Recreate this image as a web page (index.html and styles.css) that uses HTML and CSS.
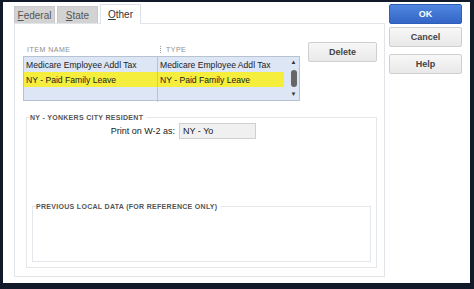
FILE: index.html
```html
<!DOCTYPE html>
<html lang="en">
<head>
    <meta charset="UTF-8">
    <title>Payroll Item - Other</title>
    <link rel="stylesheet" href="styles.css">
</head>
<body>
    <div class="window">
        <div class="main">
            <div class="tabs">
                <div class="tab"><u>F</u>ederal</div>
                <div class="tab"><u>S</u>tate</div>
                <div class="tab active"><u>O</u>ther</div>
            </div>
            <div class="panel">
                <div class="list-row">
                    <div class="list-wrap">
                        <div class="list-head">
                            <span class="col-name">ITEM NAME</span>
                            <span class="col-type">TYPE</span>
                        </div>
                        <div class="list">
                            <div class="rows">
                                <div class="row"><span class="c1">Medicare Employee Addl Tax</span><span class="c2">Medicare Employee Addl Tax</span></div>
                                <div class="row hl"><span class="c1">NY - Paid Family Leave</span><span class="c2">NY - Paid Family Leave</span></div>
                                <div class="row"><span class="c1"></span><span class="c2"></span></div>
                            </div>
                            <div class="scroll">
                                <span class="arrow">&#9650;</span>
                                <span class="thumb"></span>
                                <span class="arrow">&#9660;</span>
                            </div>
                        </div>
                    </div>
                    <button class="btn delete">Delete</button>
                </div>

                <fieldset class="group">
                    <legend>NY - YONKERS CITY RESIDENT</legend>
                    <div class="field">
                        <label>Print on W-2 as:</label>
                        <div class="input">NY - Yo</div>
                    </div>
                    <fieldset class="group inner">
                        <legend>PREVIOUS LOCAL DATA (FOR REFERENCE ONLY)</legend>
                    </fieldset>
                </fieldset>
            </div>
        </div>
        <div class="side">
            <button class="btn primary">OK</button>
            <button class="btn">Cancel</button>
            <button class="btn help">Help</button>
        </div>
    </div>
</body>
</html>
```

FILE: styles.css
```css
html, body {
    margin: 0;
    height: 100%;
}
body {
    background: #121a29;
    padding: 2px 4px 6px 3px;
    box-sizing: border-box;
    font-family: "Liberation Sans", Arial, sans-serif;
    color: #222;
}
.window {
    background: white;
    height: 100%;
    display: flex;
}
.main {
    width: 371px;
    margin-left: 11px;
    display: flex;
    flex-direction: column;
}
.tabs {
    display: flex;
    gap: 2px;
    height: 21px;
    align-items: flex-end;
}
.tab {
    width: 41px;
    height: 17px;
    background: #d3d3d3;
    color: #555;
    font-size: 10px;
    display: flex;
    align-items: center;
    justify-content: center;
    box-sizing: border-box;
    border: 1px solid #c8c8c8;
    border-bottom: none;
}
.tab.active {
    background: white;
    color: #333;
    height: 20px;
    border-color: #dde2e8;
    position: relative;
    top: 1px;
}
.panel {
    flex: 1;
    border: 1px solid #e1e5ea;
    margin-bottom: 6px;
    padding: 18px 7px 8px 8px;
    display: flex;
    flex-direction: column;
}
.list-row {
    display: flex;
    align-items: flex-start;
}
.list-wrap {
    width: 277px;
}
.list-head {
    display: flex;
    font-size: 7px;
    color: #8c8c8c;
    letter-spacing: 0.5px;
    height: 14px;
    align-items: center;
}
.col-name {
    width: 133px;
    padding-left: 4px;
}
.col-type {
    border-left: 1px dotted #999;
    padding-left: 5px;
}
.list {
    display: flex;
    border: 1px solid #b7c3d3;
    background: #dce6f4;
    height: 43px;
}
.rows {
    flex: 1;
}
.row {
    display: flex;
    height: 15px;
    font-size: 8.6px;
    align-items: center;
}
.row .c1 {
    width: 131px;
    padding-left: 2px;
    height: 100%;
    display: flex;
    align-items: center;
    border-right: 1px solid #b9c4d2;
}
.row .c2 {
    flex: 1;
    padding-left: 2px;
    height: 100%;
    display: flex;
    align-items: center;
}
.row.hl .c1, .row.hl .c2 {
    background: #f6ee3c;
}
.row.hl .c2 {
    margin-right: 4px;
}
.scroll {
    width: 11px;
    display: flex;
    flex-direction: column;
    align-items: center;
    justify-content: space-between;
    padding: 2px 0;
}
.arrow {
    font-size: 6px;
    color: #333;
    line-height: 7px;
}
.thumb {
    width: 6px;
    height: 17px;
    border-radius: 3px;
    background: #666;
}
.btn {
    font-family: "Liberation Sans", Arial, sans-serif;
    font-size: 9px;
    font-weight: bold;
    color: #444;
    background: linear-gradient(#f7f7f7, #e9e9e9);
    border: 1px solid #cfcfcf;
    border-radius: 2px;
    width: 73px;
    height: 20px;
    padding: 0;
}
.delete {
    width: 69px;
    margin-left: 8px;
}
.group {
    border: 1px solid #e3e6ea;
    margin: 13px 0 0 3px;
    padding: 0 5px 5px 5px;
    flex: 1;
    display: flex;
    flex-direction: column;
}
.group legend {
    font-size: 7px;
    font-weight: bold;
    color: #555;
    letter-spacing: 0.3px;
    padding: 0 4px 0 0;
    margin-left: -2px;
}
.field {
    display: flex;
    align-items: center;
    justify-content: flex-start;
    margin-top: 2px;
}
.field label {
    width: 143px;
    text-align: right;
    font-size: 9px;
    padding-right: 4px;
}
.input {
    width: 72px;
    height: 14px;
    background: #f0f0f0;
    border: 1px solid #cfcfcf;
    font-size: 9px;
    padding-left: 3px;
    line-height: 14px;
}
.group.inner {
    margin: auto 0 0 0;
    height: 52px;
    flex: none;
}
.side {
    display: flex;
    flex-direction: column;
    margin-left: 4px;
    padding-top: 2px;
    gap: 3px;
}
.btn.primary {
    background: linear-gradient(#5087e0, #3365c6);
    border-color: #2f5eb8;
    color: white;
}
.btn.help {
    margin-top: 4px;
}
```
